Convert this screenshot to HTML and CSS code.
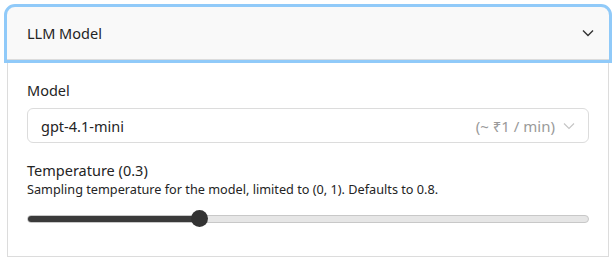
FILE: index.html
```html
<!DOCTYPE html>
<html>
<head>
<meta charset="utf-8">
<link rel="stylesheet" href="styles.css">
</head>
<body>
<div class="accordion">
  <button class="acc-header">
    <span class="acc-title">LLM Model</span>
    <svg class="chev" width="12" height="8" viewBox="0 0 12 8"><path d="M1 1.5 L6 6.5 L11 1.5" fill="none" stroke="#333" stroke-width="1.4"/></svg>
  </button>
  <div class="acc-body">
    <div class="field">
      <div class="label">Model</div>
      <div class="select">
        <span class="sel-value">gpt-4.1-mini</span>
        <span class="sel-right">
          <span class="sel-cost">(~ ₹1 / min)</span>
          <svg class="sel-chev" width="12" height="8" viewBox="0 0 12 8"><path d="M1 1.5 L6 6.5 L11 1.5" fill="none" stroke="#c4c4c4" stroke-width="1.1"/></svg>
        </span>
      </div>
    </div>
    <div class="field temp">
      <div class="label">Temperature (0.3)</div>
      <div class="desc">Sampling temperature for the model, limited to (0, 1). Defaults to 0.8.</div>
      <div class="slider">
        <div class="track">
          <div class="fill" style="width: calc(0.3 * (100% - 17px) + 8.5px)"></div>
        </div>
        <div class="thumb" style="left: calc(0.3 * (100% - 17px))"></div>
      </div>
    </div>
  </div>
</div>
</body>
</html>
```
FILE: styles.css
```css
* { box-sizing: border-box; }
html, body { margin: 0; padding: 0; background: #fff; }
body {
  padding: 7px 6px 0 7px;
  font-family: "Noto Sans", "Open Sans", sans-serif;
  color: #242424;
}
.accordion {
  border: 1px solid #dcdcdc;
  border-top: none;
  border-radius: 8px 8px 0 0;
}
.acc-header {
  display: flex;
  align-items: center;
  justify-content: space-between;
  width: calc(100% + 2px);
  margin: 0 -1px;
  height: 53px;
  padding: 0 15px 0 20px;
  background: #f9f9f9;
  border: none;
  border-bottom: 1px solid #dcdcdc;
  border-radius: 8px 8px 0 0;
  outline: 3px solid #90caf9;
  font-family: inherit;
  font-size: 14.5px;
  color: #242424;
  text-align: left;
  cursor: pointer;
}
.acc-title { line-height: 20px; }
.chev { display: block; }
.acc-body {
  padding: 20px 19px 29px 19px;
}
.label {
  font-size: 14.5px;
  line-height: 20px;
  color: #242424;
}
.field + .field { margin-top: 17px; }
.select {
  margin-top: 8px;
  height: 35px;
  border: 1px solid #dcdcdc;
  border-radius: 6px;
  display: flex;
  align-items: center;
  justify-content: space-between;
  padding: 0 13px 0 13px;
  font-size: 14.5px;
}
.sel-value { color: #242424; }
.sel-right { display: flex; align-items: center; gap: 8px; }
.sel-cost { color: #9a9a9a; font-size: 15px; }
.sel-chev { display: block; }
.desc {
  font-size: 12.7px;
  line-height: 17px;
  color: #242424;
  margin-top: 1px;
}
.slider {
  position: relative;
  height: 17px;
  margin-top: 12px;
  display: flex;
  align-items: center;
}
.track {
  width: 100%;
  height: 8px;
  border-radius: 4px;
  background: #e6e6e6;
  border: 1px solid #c8c8c8;
  overflow: hidden;
}
.fill {
  background: #3a3a3a;
  margin: -1px 0 0 -1px;
  height: 8px;
}
.thumb {
  position: absolute;
  top: 0;
  width: 17px;
  height: 17px;
  border-radius: 50%;
  background: #333;
}
```
